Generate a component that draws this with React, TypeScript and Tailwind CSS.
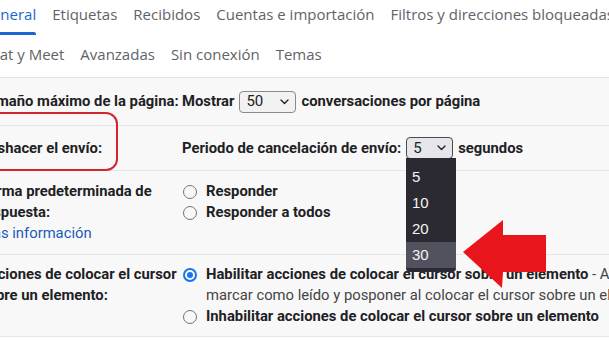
import React from "react";

const Chevron = () => (
  <svg width="9" height="6" viewBox="0 0 9 6" className="shrink-0">
    <polyline points="1,1 4.5,4.5 8,1" fill="none" stroke="#222" strokeWidth="1.4" strokeLinecap="round" strokeLinejoin="round" />
  </svg>
);

const Radio = ({ checked = false }: { checked?: boolean }) =>
  checked ? (
    <span className="w-[14px] h-[14px] rounded-full border-2 border-[#1a73e8] flex items-center justify-center shrink-0">
      <span className="w-[6px] h-[6px] rounded-full bg-[#1a73e8]" />
    </span>
  ) : (
    <span className="w-[14px] h-[14px] rounded-full border-[1.5px] border-[#6f7378] shrink-0" />
  );

export default function App() {
  const tabs1 = ["Etiquetas", "Recibidos", "Cuentas e importación", "Filtros y direcciones bloqueadas"];
  const tabs2 = ["Chat y Meet", "Avanzadas", "Sin conexión", "Temas"];
  return (
    <div
      className="relative w-[609px] h-[342px] overflow-hidden bg-white text-[#202124]"
      style={{ fontFamily: "Roboto, 'Liberation Sans', sans-serif" }}
    >
      {/* Tabs row 1 */}
      <div className="flex h-[35px] ml-[-27px] whitespace-nowrap text-[15px] text-[#5f6368]" style={{ fontFamily: "'Open Sans', Roboto, sans-serif" }}>
        <div className="flex flex-col justify-between px-2">
          <span className="pt-[4px] leading-[20px] text-[#1a67d2]">General</span>
          <span className="h-[3px] bg-[#1a67d2] rounded-t-[2px]" />
        </div>
        {tabs1.map((t) => (
          <div key={t} className="px-2 pt-[4px] leading-[20px]">{t}</div>
        ))}
      </div>
      {/* Tabs row 2 */}
      <div className="flex h-[42px] ml-[-27px] whitespace-nowrap text-[15px] text-[#5f6368]" style={{ fontFamily: "'Open Sans', Roboto, sans-serif" }}>
        {tabs2.map((t) => (
          <div key={t} className="px-2 pt-[9px] leading-[20px]">{t}</div>
        ))}
      </div>

      {/* Settings */}
      <div className="border-t border-[#e2e2e2] bg-[#f9f8f8] text-[14.8px] font-bold leading-[21px] whitespace-nowrap">
        <div className="flex items-center h-[48px] border-b border-[#e6e6e6] ml-[-20px]">
          <div className="w-[202px] shrink-0">Tamaño máximo de la página:</div>
          <div className="flex items-center gap-[5px]">
            <span>Mostrar</span>
            <span className="flex items-center justify-between w-[57px] h-[22px] pl-[6px] pr-[6px] border border-[#8a8a8a] rounded-[4px] bg-[#f2f2f2] font-normal text-[15px]">
              50 <Chevron />
            </span>
            <span>conversaciones por página</span>
          </div>
        </div>

        <div className="flex items-center h-[45px] border-b border-[#e6e6e6] ml-[-20px]">
          <div className="w-[202px] shrink-0">Deshacer el envío:</div>
          <div className="flex items-center gap-[5px]">
            <span>Periodo de cancelación de envío:</span>
            <span className="flex items-center justify-between w-[47px] h-[22px] pl-[6px] pr-[6px] border border-[#4a4a4a] rounded-[4px] bg-[#e6e6ea] font-normal text-[15px]">
              5 <Chevron />
            </span>
            <span>segundos</span>
          </div>
        </div>

        <div className="flex h-[84px] pt-[10px] border-b border-[#e6e6e6] ml-[-20px]">
          <div className="w-[202px] shrink-0">
            <div>Forma predeterminada de</div>
            <div>respuesta:</div>
            <div className="font-normal text-[#1a5bb8]">Más información</div>
          </div>
          <div className="flex flex-col pl-[1px]">
            <div className="flex items-center gap-[9px]"><Radio /> <span>Responder</span></div>
            <div className="flex items-center gap-[9px]"><Radio /> <span>Responder a todos</span></div>
          </div>
        </div>

        <div className="flex h-[82px] pt-[9px] border-b border-[#e6e6e6] ml-[-20px]">
          <div className="w-[202px] shrink-0">
            <div>Acciones de colocar el cursor</div>
            <div>sobre un elemento:</div>
          </div>
          <div className="flex flex-col pl-[1px]">
            <div className="flex items-center gap-[9px]">
              <Radio checked />
              <span>
                Habilitar acciones de colocar el cursor sobre un elemento
                <span className="font-normal text-[#444]"> - Accede rápidamente a</span>
              </span>
            </div>
            <div className="pl-[23px] font-normal text-[#444]">marcar como leído y posponer al colocar el cursor sobre un elemento.</div>
            <div className="flex items-center gap-[9px]">
              <Radio />
              <span>Inhabilitar acciones de colocar el cursor sobre un elemento</span>
            </div>
          </div>
        </div>
      </div>

      {/* Red annotation outline */}
      <div className="absolute left-[-12px] top-[112px] w-[130px] h-[59px] border-2 border-[#d1262e] rounded-[12px]" />

      {/* Open dropdown */}
      <div
        className="absolute left-[406px] top-[158px] w-[50px] h-[114px] bg-[#2b2a33] rounded-b-[4px] pt-[6px] text-[15px] text-[#f4f4f6]"
        style={{ fontFamily: "'Liberation Sans', Arial, sans-serif" }}
      >
        {["5", "10", "20", "30"].map((v, i) => (
          <div key={v} className={`h-[26px] leading-[26px] pl-[6px] ${i === 3 ? "bg-[#52525e]" : ""}`}>{v}</div>
        ))}
      </div>

      {/* Red arrow */}
      <svg className="absolute left-[455px] top-[212px]" width="100" height="84" viewBox="0 0 100 84">
        <polygon points="8,40 48,8 48,23 91,23 91,60 48,60 47,76" fill="#e8151d" />
      </svg>
    </div>
  );
}
